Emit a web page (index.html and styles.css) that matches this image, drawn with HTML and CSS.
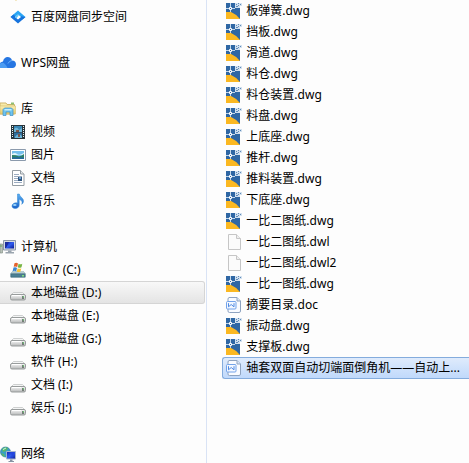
FILE: index.html
```
<!DOCTYPE html>
<html lang="zh-CN">
  <head>
    <meta charset="UTF-8" />
    <title>本地磁盘 (D:)</title>
    <link rel="stylesheet" href="styles.css">
  </head>
  <body>
    <svg class="sprite" width="0" height="0" aria-hidden="true">
      <defs>
        <linearGradient id="gBlue" x1="0" y1="0" x2="0" y2="1">
          <stop offset="0" stop-color="#5aaef2" />
          <stop offset="1" stop-color="#1c62c8" />
        </linearGradient>
        <linearGradient id="gFolder" x1="0" y1="0" x2="0" y2="1">
          <stop offset="0" stop-color="#fbf1b4" />
          <stop offset="1" stop-color="#e3c667" />
        </linearGradient>
        <linearGradient id="gDisk" x1="0" y1="0" x2="0" y2="1">
          <stop offset="0" stop-color="#fafafa" />
          <stop offset="1" stop-color="#b4b6b6" />
        </linearGradient>
        <linearGradient id="gScreen" x1="0" y1="0" x2="1" y2="1">
          <stop offset="0" stop-color="#1224a8" />
          <stop offset="0.5" stop-color="#2f5cf0" />
          <stop offset="1" stop-color="#0a1a90" />
        </linearGradient>
      </defs>
      <symbol id="sync" viewBox="0 0 16 16">
        <path d="M8 1.500 15.500 8 12.500 10.500 8 6 5 8.800 .5 8z" fill="#2aa5f4" />
        <path d="M8 14.500.5 8 3.500 5.500 8 10 11 7.200 15.500 8z" fill="#1673dd" />
        <path d="M8 5.500 11 8 8 10.500 5 8z" fill="#fcfcfc" />
        <path d="M5 8 8 5.500 8.800 6.200 6.500 9.200z" fill="#58c6fb" />
      </symbol>
      <symbol id="cloud" viewBox="0 0 16 16">
        <path d="M0 13V8C1 7 2 6.500 3 6.500 3.500 3.500 5.500 2 7.500 2c2.500 0 4 1.500 4.500 3.500 2.500 0 4 1.500 4 3.800 0 2.200-1.500 3.700-3.500 3.700z" fill="#2676e2" />
        <path d="M0 13V8.500c3-2 5.500 0 7.500 4.500z" fill="#4c9cf2" />
        <path d="M8 8.500q1.500-3 4-3" fill="none" stroke="#6db2f7" />
      </symbol>
      <symbol id="library" viewBox="0 0 16 16">
        <path d="M0 2h6l1 1.500h7.500V13H0z" fill="url(#gFolder)" stroke="#cdb469" />
        <path d="M11 1.500h3v2h-3z" fill="#8fbf72" />
        <path d="M0 5h15.500V13H0z" fill="url(#gFolder)" stroke="#d5bb6b" stroke-width=".6" />
        <path d="M3 14.500V8.500l1.500-1.500h7l1.500 1.500v6h-3V11H6v3.500z" fill="#6fc4ee" stroke="#3f90c6" stroke-width=".7" />
        <path d="M4.500 8h7v1.500h-7z" fill="#c5edfb" />
      </symbol>
      <symbol id="video" viewBox="0 0 16 16">
        <path d="M1 1h14v14H1z" fill="#28343a" />
        <path d="M4 2h8v6H4z" fill="#3a87b5" />
        <path d="M4 8.500h8V14H4z" fill="#326f9d" />
        <path d="M4 5q3-3 5 1l3-2v4H4zM5 13q3-5 7-1v2H5z" fill="#6fb6d8" />
        <path d="M6 6h3v2H6zM8 10h2v3H8z" fill="#7b5448" />
        <path d="M2.500 2v12M13.500 2v12" stroke="#e8f2f2" stroke-dasharray="1 1" />
      </symbol>
      <symbol id="image" viewBox="0 0 16 16">
        <path d="M.5 2.500h15v11H.5z" fill="#fff" stroke="#8b9aac" />
        <path d="M2 4h12v8H2z" fill="#75bfec" />
        <path d="M2 7q3-2 5 0t7-1v2H2z" fill="#dff3f8" />
        <path d="M2 8q4 0 6 1t6-2v5H2z" fill="#2d8065" />
        <path d="M2 10.500q6-1 12 0V12H2z" fill="#246a9a" />
      </symbol>
      <symbol id="text" viewBox="0 0 16 16">
        <path d="M2.500.5h8L14 4v11.500H2.500z" fill="#fff" stroke="#949ca3" />
        <path d="M10.500.5V4H14" fill="#e5e9ec" stroke="#949ca3" />
        <path d="M4 4.500h5M4 6.500h8M4 8.500h4M4 10.500h4M4 12.500h8" stroke="#9babc0" />
        <path d="M8 7h4v4H8z" fill="#31567f" />
        <path d="M9 7h2v2H9z" fill="#6ba1d1" />
      </symbol>
      <symbol id="music" viewBox="0 0 16 16">
        <path d="M7.500 1h1.800c.2 3 4.700 4 4.200 7.500-.2 1.500-1 2.200-1.800 2.800C13 8.500 11 7 9.200 6.300V12c0 2.200-1.700 3.500-4 3.500-2 0-3.200-1-3.200-2.500 0-2.200 2.800-3.800 5.500-3z" fill="url(#gBlue)" stroke="#2a86d2" stroke-width=".5" />
        <ellipse cx="4.800" cy="12" rx="1.800" ry="1" fill="#98d5fa" />
      </symbol>
      <symbol id="computer" viewBox="0 0 16 16">
        <path d="M0 5h2.500v9H0z" fill="#b9c2b9" stroke="#7b877e" stroke-width=".6" />
        <path d="M0 7h2" stroke="#5fa159" />
        <path d="M3.500 1.500h12v9.500h-12z" fill="#d5dbe2" stroke="#8d98a8" />
        <path d="M5 3h9v6.500H5z" fill="url(#gScreen)" />
        <path d="M5 3h4L6 9H5z" fill="#1a2a9c" />
        <path d="M8 11.500h3.500V13H14v1.500H5.500V13H8z" fill="#9aa4ae" />
      </symbol>
      <symbol id="windisk" viewBox="0 0 16 16">
        <path d="M3 9h10l2.500 2.500v4H.5v-4z" fill="#5d8d9c" />
        <path d="M3 9h10l2.500 2.500H.5z" fill="#b7cdd0" />
        <path d="M1 12h14v3H1z" fill="#4a8195" stroke="#426a78" stroke-width=".6" />
        <path d="M12 13h2v1.500h-2z" fill="#81e07c" />
        <path d="M4.500 1.200Q6.500.2 8 1.500L7.200 5Q5.500 4 3.700 4.800z" fill="#e4622c" />
        <path d="M8.600 1.800q1.800 1 3.700 0l-.8 3.400q-1.800 1-3.700 0z" fill="#77b543" />
        <path d="M3.500 5.500q2-.8 3.500.4l-.8 3.500q-1.800-1-3.600-.2z" fill="#3a85d0" />
        <path d="M7.600 6.200q1.800 1 3.700 0l-.8 3.400q-1.800 1-3.700 0z" fill="#f5c334" />
      </symbol>
      <symbol id="disk" viewBox="0 0 16 16">
        <path d="M3.500 7.500h9L15 10H1z" fill="#f4f5f5" stroke="#bcbfbf" stroke-width=".7" />
        <rect x=".5" y="9.500" width="15" height="5.500" rx="1.500" fill="url(#gDisk)" stroke="#989c9c" />
        <path d="M2 10.500h9" stroke="#fff" />
        <path d="M12 11h2v3h-2z" fill="#747d77" />
        <path d="M13 11h1v1.500h-1z" fill="#6ac673" />
      </symbol>
      <symbol id="network" viewBox="0 0 16 16">
        <circle cx="5.500" cy="6" r="5" fill="#3a9fc6" stroke="#2c7196" stroke-width=".6" />
        <path d="M2 3q3-3 6-1L6 5l-3 1zM1 7l3 1 1 3q-3-1-4-4z" fill="#5cb968" />
        <path d="M3 3.500 6 2" stroke="#c9f3ed" />
        <path d="M6.500 5.500h9V13h-9z" fill="url(#gScreen)" stroke="#a8b6cc" />
        <path d="M11 6h4L12 12z" fill="#2346de" />
        <path d="M10 13.500h2.500V15H14v1H8.500v-1H10z" fill="#8793a3" />
      </symbol>
      <symbol id="dwg" viewBox="0 0 16 16">
        <path d="M0 0h9v5h5v11H0z" fill="#2f67a4" />
        <path d="M0 9h5q5 2 9 7H0z" fill="#fbb821" />
        <path d="M4.500 0v9M0 5.500h9" stroke="#c3d7ea" />
        <path d="M3.500 4.500h2v2h-2z" fill="#2f67a4" stroke="#fff" />
        <path d="M9 0h7v3h-2v2H9z" fill="#d3e1ef" />
        <path d="M10 1.500h1M12 .5h1M12 2.500h1M14 1.500h1M10 3.500h2" stroke="#5f8bb9" />
      </symbol>
      <symbol id="blank" viewBox="0 0 16 16">
        <path d="M2.500.5h8L14.500 4.500v11h-12z" fill="#fbfbfb" stroke="#c6c6c6" />
        <path d="M10.500.5v4h4" fill="#eee" stroke="#c6c6c6" />
      </symbol>
      <symbol id="doc" viewBox="0 0 16 16">
        <path d="M3 .5h8l3.500 3.500v10q0 1.500-1.500 1.500H3.500Q2 15.500 2 14V2Q2 .5 3.500.5" fill="#f9fbff" stroke="#8ea3c0" />
        <path d="M11 .5V4h3.500" fill="#dce8f7" stroke="#8ea3c0" />
        <rect x=".5" y="4.500" width="9.500" height="7.500" rx="1" fill="#f4f8ff" stroke="#73a3ea" />
        <path d="M2.500 6.200v3.600l2.700-2.300L8 9.800V6.200" fill="none" stroke="#4f8ae2" />
      </symbol>
      <symbol id="folder" viewBox="0 0 16 16">
        <path d="M1 3h5l1 2h8v7q-5 1-7 4-2-3-7-4z" fill="url(#gFolder)" />
      </symbol>
    </svg>

    <div class="explorer">
      <nav class="sidebar" aria-label="导航窗格">
        <div class="cut"><svg class="icon"><use href="#folder" /></svg></div>
        <ul class="group">
          <li><a class="node child" href="#"><svg class="icon"><use href="#sync" /></svg>百度网盘同步空间</a></li>
        </ul>
        <ul class="group">
          <li><a class="node" href="#"><svg class="icon"><use href="#cloud" /></svg>WPS网盘</a></li>
        </ul>
        <ul class="group">
          <li><a class="node" href="#"><svg class="icon"><use href="#library" /></svg>库</a></li>
          <li><a class="node child" href="#"><svg class="icon"><use href="#video" /></svg>视频</a></li>
          <li><a class="node child" href="#"><svg class="icon"><use href="#image" /></svg>图片</a></li>
          <li><a class="node child" href="#"><svg class="icon"><use href="#text" /></svg>文档</a></li>
          <li><a class="node child" href="#"><svg class="icon"><use href="#music" /></svg>音乐</a></li>
        </ul>
        <ul class="group">
          <li><a class="node" href="#"><svg class="icon"><use href="#computer" /></svg>计算机</a></li>
          <li><a class="node child" href="#"><svg class="icon"><use href="#windisk" /></svg>Win7 (C:)</a></li>
          <li><a class="node child current" href="#" aria-current="page"><svg class="icon"><use href="#disk" /></svg>本地磁盘 (D:)</a></li>
          <li><a class="node child" href="#"><svg class="icon"><use href="#disk" /></svg>本地磁盘 (E:)</a></li>
          <li><a class="node child" href="#"><svg class="icon"><use href="#disk" /></svg>本地磁盘 (G:)</a></li>
          <li><a class="node child" href="#"><svg class="icon"><use href="#disk" /></svg>软件 (H:)</a></li>
          <li><a class="node child" href="#"><svg class="icon"><use href="#disk" /></svg>文档 (I:)</a></li>
          <li><a class="node child" href="#"><svg class="icon"><use href="#disk" /></svg>娱乐 (J:)</a></li>
        </ul>
        <ul class="group">
          <li><a class="node" href="#"><svg class="icon"><use href="#network" /></svg>网络</a></li>
        </ul>
      </nav>

      <main class="content">
        <ul class="files">
          <li><a class="file" href="#"><svg class="icon"><use href="#dwg" /></svg>板弹簧.dwg</a></li>
          <li><a class="file" href="#"><svg class="icon"><use href="#dwg" /></svg>挡板.dwg</a></li>
          <li><a class="file" href="#"><svg class="icon"><use href="#dwg" /></svg>滑道.dwg</a></li>
          <li><a class="file" href="#"><svg class="icon"><use href="#dwg" /></svg>料仓.dwg</a></li>
          <li><a class="file" href="#"><svg class="icon"><use href="#dwg" /></svg>料仓装置.dwg</a></li>
          <li><a class="file" href="#"><svg class="icon"><use href="#dwg" /></svg>料盘.dwg</a></li>
          <li><a class="file" href="#"><svg class="icon"><use href="#dwg" /></svg>上底座.dwg</a></li>
          <li><a class="file" href="#"><svg class="icon"><use href="#dwg" /></svg>推杆.dwg</a></li>
          <li><a class="file" href="#"><svg class="icon"><use href="#dwg" /></svg>推料装置.dwg</a></li>
          <li><a class="file" href="#"><svg class="icon"><use href="#dwg" /></svg>下底座.dwg</a></li>
          <li><a class="file" href="#"><svg class="icon"><use href="#dwg" /></svg>一比二图纸.dwg</a></li>
          <li><a class="file" href="#"><svg class="icon"><use href="#blank" /></svg>一比二图纸.dwl</a></li>
          <li><a class="file" href="#"><svg class="icon"><use href="#blank" /></svg>一比二图纸.dwl2</a></li>
          <li><a class="file" href="#"><svg class="icon"><use href="#dwg" /></svg>一比一图纸.dwg</a></li>
          <li><a class="file" href="#"><svg class="icon"><use href="#doc" /></svg>摘要目录.doc</a></li>
          <li><a class="file" href="#"><svg class="icon"><use href="#dwg" /></svg>振动盘.dwg</a></li>
          <li><a class="file" href="#"><svg class="icon"><use href="#dwg" /></svg>支撑板.dwg</a></li>
          <li><a class="file selected" href="#"><svg class="icon"><use href="#doc" /></svg>轴套双面自动切端面倒角机——自动上...</a></li>
        </ul>
      </main>
    </div>
  </body>
</html>
```

FILE: styles.css
```
* {
  box-sizing: border-box;
}
body {
  margin: 0;
  background: #fdfdfd;
  color: #000;
  font: 12px/16px "Noto Sans", "Noto Sans CJK SC", sans-serif;
}
ul {
  margin: 0;
  padding: 0;
  list-style: none;
}
a {
  color: inherit;
  text-decoration: none;
}
.sprite {
  position: absolute;
}
.explorer {
  display: flex;
  min-height: 100vh;
}
.icon {
  flex: none;
  width: 16px;
  height: 16px;
}

/* 左侧导航 */
.sidebar {
  flex: none;
  width: 44%;
}
.cut {
  display: flex;
  align-items: flex-end;
  height: 5px;
  padding: 0 0 4px 8px;
  overflow: hidden;
}
.group + .group {
  margin-top: 23px;
}
.node {
  display: flex;
  align-items: center;
  gap: 5px;
  height: 23px;
  white-space: nowrap;
}
.child {
  padding-left: 10px;
}
.current {
  margin-right: 1px;
  border: 1px solid #d5d5d5;
  border-left: 0;
  border-radius: 0 3px 3px 0;
  background: linear-gradient(#f8f8f8, #e4e4e4);
}

/* 文件列表 */
.content {
  flex: 1;
  min-width: 0;
  padding-left: 15px;
  border-left: 1px solid #d9e3f5;
  overflow: hidden;
}
.file {
  display: flex;
  align-items: center;
  gap: 4px;
  height: 21px;
  padding-left: 4px;
  white-space: nowrap;
}
.selected {
  height: 22px;
  padding-left: 3px;
  border: 1px solid #84acdd;
  border-right: 0;
  border-radius: 3px 0 0 3px;
  background: linear-gradient(#dfebfc, #c0d9fb);
}
```
